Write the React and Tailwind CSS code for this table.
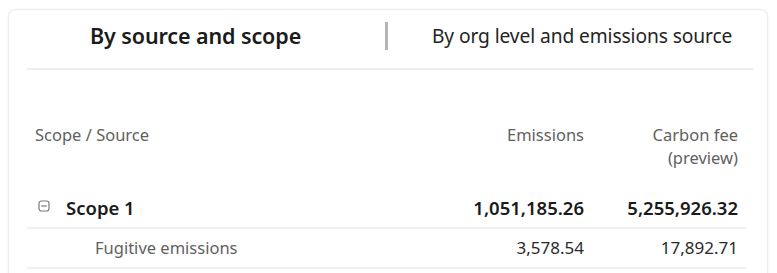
import { useState } from 'react';

const rows = [
  { name: 'Scope 1', emissions: '1,051,185.26', fee: '5,255,926.32', group: true },
  { name: 'Fugitive emissions', emissions: '3,578.54', fee: '17,892.71' },
];

function CollapseIcon() {
  return (
    <svg width="12" height="12" viewBox="0 0 12 12" className="shrink-0 -mt-[5px]">
      <rect x="1" y="1" width="10" height="10" rx="2.5" fill="none" stroke="#7a7a7a" strokeWidth="1.2" />
      <line x1="3.2" y1="6" x2="8.8" y2="6" stroke="#7a7a7a" strokeWidth="1.2" />
    </svg>
  );
}

export default function App() {
  const [tab, setTab] = useState(0);

  return (
    <div className="w-[777px] h-[273px] overflow-hidden bg-white pt-[9px] pl-[8px]" style={{ fontFamily: '"Noto Sans", "Open Sans", sans-serif' }}>
      <div className="w-[760px] h-[300px] rounded-lg border border-[#ececec] shadow-[0_0_3px_rgba(0,0,0,0.06)] bg-white px-[18px]">
        {/* Tabs */}
        <div className="h-[60px] flex items-center pb-[6px] border-b-2 border-[#ededed] mr-[-4px]">
          <div className="w-[358px] shrink-0 pl-[63px]">
            <button onClick={() => setTab(0)} className={`text-[21.5px] tracking-[-0.1px] whitespace-nowrap ${tab === 0 ? 'font-semibold text-[#1b1b1b]' : 'text-[#242424]'}`}>
              By source and scope
            </button>
          </div>
          <div className="w-[3px] h-[28px] bg-[#b4b4b4] shrink-0" />
          <button onClick={() => setTab(1)} className={`ml-[44px] text-[19.2px] tracking-[-0.1px] whitespace-nowrap ${tab === 1 ? 'font-semibold text-[#1b1b1b]' : 'text-[#242424]'}`}>
            By org level and emissions source
          </button>
        </div>

        {/* Table */}
        <div className="mt-[53px] mr-[2px]">
          <div className="flex text-[16.5px] text-[#5f5f5f] leading-[23px] h-[66px]">
            <div className="w-[410px] pl-[8px]">Scope / Source</div>
            <div className="w-[156px] text-right pr-[9px]">Emissions</div>
            <div className="flex-1 text-right pr-[9px]">Carbon fee<br />(preview)</div>
          </div>
          {rows.map((r) => (
            <div key={r.name} className={`flex items-center h-[40px] border-b-2 border-[#f0f0f0] ${r.group ? 'text-[18.5px] font-semibold text-[#1b1b1b]' : 'text-[16.5px] text-[#5f5f5f]'}`}>
              <div className={`w-[410px] flex items-center ${r.group ? 'pl-[11px] gap-[16px]' : 'pl-[68px]'}`}>
                {r.group && <CollapseIcon />}
                <span>{r.name}</span>
              </div>
              <div className={`w-[156px] text-right pr-[9px] ${r.group ? '' : 'text-[17px] text-[#2a2a2a]'}`}>{r.emissions}</div>
              <div className={`flex-1 text-right pr-[9px] ${r.group ? '' : 'text-[17px] text-[#2a2a2a]'}`}>{r.fee}</div>
            </div>
          ))}
        </div>
      </div>
    </div>
  );
}
